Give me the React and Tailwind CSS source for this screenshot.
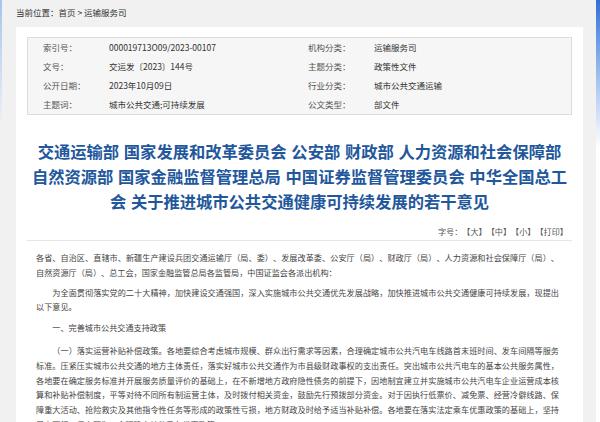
import React from 'react';

const meta = [
  ['索引号：', '000019713O09/2023-00107', '机构分类：', '运输服务司'],
  ['文号：', '交运发〔2023〕144号', '主题分类：', '政策性文件'],
  ['公开日期：', '2023年10月09日', '行业分类：', '城市公共交通运输'],
  ['主题词：', '城市公共交通;可持续发展', '公文类型：', '部文件'],
];

const App = () => {
  return (
    <div
      lang="zh-CN"
      className="flex h-[422px] w-[600px] overflow-hidden bg-[#f1f1f1] font-['Noto_Sans_CJK_SC','Noto_Sans',sans-serif] [text-spacing-trim:space-all]"
    >
      <div className="w-[2px] bg-linear-to-b from-[#a6c4ec] via-[#d6e3f5] via-[20%] to-[#f1f1f1] to-[30%]" />

      <div className="flex-1 pl-[14px] pr-[13px]">
        {/* Breadcrumb */}
        <div className="h-[27px] pt-[6px] text-[8.5px] leading-[12px] text-[#333]">
          当前位置：首页 &gt; 运输服务司
        </div>

        <div className="bg-white px-[11px] pt-[10px] h-[395px]">
          {/* Meta table */}
          <div className="border border-[#dcdcdc] bg-[#f6f6f6] text-[8.5px]">
            {meta.map((row) => (
              <div key={row[0]} className="flex h-[19px] items-center">
                <div className="flex w-[280px] pl-[15px]">
                  <span className="w-[66px] text-[#555]">{row[0]}</span>
                  <span className="text-[#333]">{row[1]}</span>
                </div>
                <div className="flex flex-1">
                  <span className="w-[66px] text-[#555]">{row[2]}</span>
                  <span className="text-[#333]">{row[3]}</span>
                </div>
              </div>
            ))}
          </div>

          {/* Title */}
          <h1 className="mt-[24px] text-center text-[16.3px] font-bold leading-[25px] text-[#22579c] [word-spacing:1px]">
            交通运输部 国家发展和改革委员会 公安部 财政部 人力资源和社会保障部
            <br />
            自然资源部 国家金融监督管理总局 中国证券监督管理委员会 中华全国总工
            <br />
            会 关于推进城市公共交通健康可持续发展的若干意见
          </h1>

          {/* Font size controls */}
          <div className="mt-[12px] border-b border-[#e6e6e6] pb-[2px] pr-[4px] text-right text-[8.15px] leading-[12px] text-[#555]">
            字号：【大】【中】【小】【打印】
          </div>

          {/* Body */}
          <div className="pl-[9px] pr-[13px] pt-[10px] text-justify text-[8.15px] leading-[14.8px] text-[#444]">
            <p>
              各省、自治区、直辖市、新疆生产建设兵团交通运输厅（局、委）、发展改革委、公安厅（局）、财政厅（局）、人力资源和社会保障厅（局）、自然资源厅（局）、总工会，国家金融监管总局各监管局，中国证监会各派出机构：
            </p>
            <p className="mt-[5px] indent-[2em]">
              为全面贯彻落实党的二十大精神，加快建设交通强国，深入实施城市公共交通优先发展战略，加快推进城市公共交通健康可持续发展，现提出以下意见。
            </p>
            <p className="mt-[6px] indent-[2em]">一、完善城市公共交通支持政策</p>
            <p className="mt-[8px] indent-[2em]">
              （一）落实运营补贴补偿政策。各地要综合考虑城市规模、群众出行需求等因素，合理确定城市公共汽电车线路首末班时间、发车间隔等服务标准。压紧压实城市公共交通的地方主体责任，落实好城市公共交通作为市县级财政事权的支出责任。突出城市公共汽电车的基本公共服务属性，各地要在确定服务标准并开展服务质量评价的基础上，在不新增地方政府隐性债务的前提下，因地制宜建立并实施城市公共汽电车企业运营成本核算和补贴补偿制度，平等对待不同所有制运营主体，及时拨付相关资金，鼓励先行预拨部分资金。对于因执行低票价、减免票、经营冷僻线路、保障重大活动、抢险救灾及其他指令性任务等形成的政策性亏损，地方财政及时给予适当补贴补偿。各地要在落实法定乘车优惠政策的基础上，坚持量力而行、尽力而为，合理确定其他乘车优惠政策。
            </p>
          </div>
        </div>
      </div>

      <div className="w-[4px] bg-linear-to-b from-[#2f6fd6] via-[#9fc0ee] via-[18%] to-white to-[35%]" />
    </div>
  );
};

export default App;
